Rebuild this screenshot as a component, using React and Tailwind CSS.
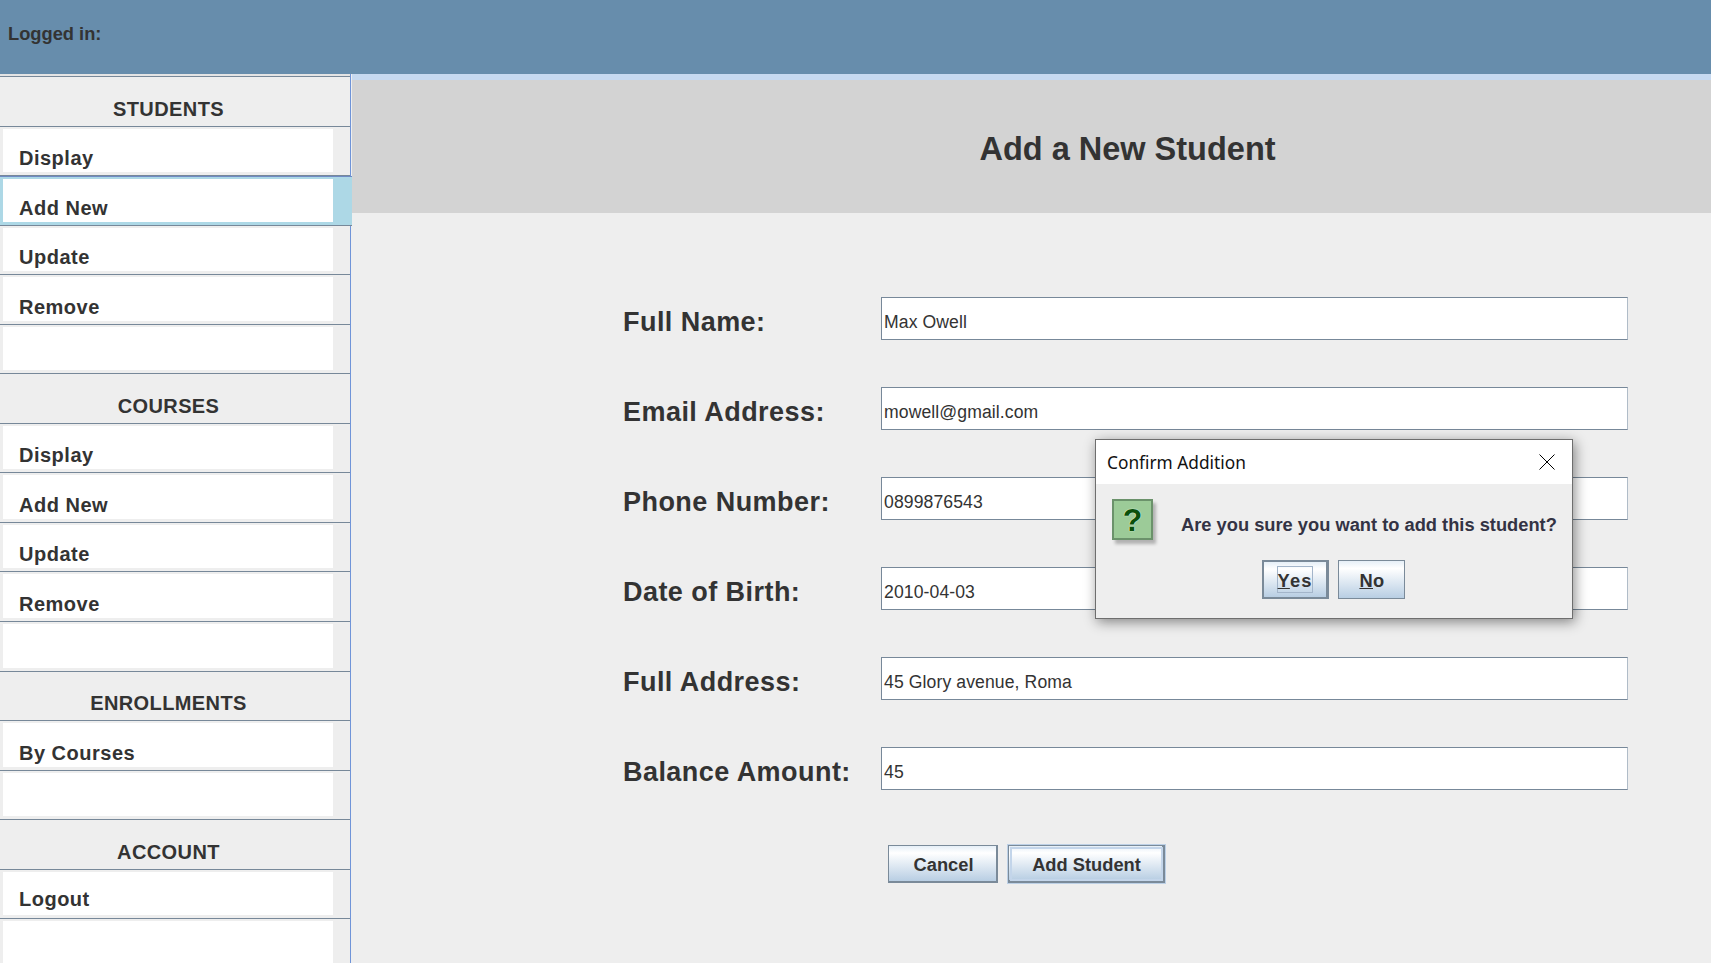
const sections = [
  { title: 'STUDENTS', items: ['Display', 'Add New', 'Update', 'Remove', ''] },
  { title: 'COURSES', items: ['Display', 'Add New', 'Update', 'Remove', ''] },
  { title: 'ENROLLMENTS', items: ['By Courses', ''] },
  { title: 'ACCOUNT', items: ['Logout', ''] },
];

const fields = [
  { label: 'Full Name:', value: 'Max Owell' },
  { label: 'Email Address:', value: 'mowell@gmail.com' },
  { label: 'Phone Number:', value: '0899876543' },
  { label: 'Date of Birth:', value: '2010-04-03' },
  { label: 'Full Address:', value: '45 Glory avenue, Roma' },
  { label: 'Balance Amount:', value: '45' },
];

const SectionHeader = ({ title }) => (
  <div className="h-[49.55px] w-[350px] shrink-0 flex items-end justify-center pb-[5px] bg-[#eeeeee] border-b border-[#778899] text-[20px] leading-[24px] font-bold tracking-[0.4px] text-[#333333]">
    <span className="pr-[13px]">{title}</span>
  </div>
);

const NavItem = ({ label, active }) => (
  <div className={`h-[49.55px] shrink-0 flex flex-col border-b pt-[2px] pb-[3px] pl-[3px] ${active ? 'w-[352px] bg-[#add8e6] border-[#778899] border-t border-t-[#6f8bc4]' : 'w-[350px] bg-[#eeeeee] border-[#778899]'}`}>
    <div className={`w-[330px] flex-1 bg-white flex items-end pl-[16px] text-[20px] leading-[24px] font-bold tracking-[0.5px] text-[#333333] ${label === 'Logout' ? 'pb-[4px]' : 'pb-[2px]'}`}>
      {label}
    </div>
  </div>
);

const Sidebar = () => (
  <div className="w-[352px] shrink-0 h-full overflow-hidden relative z-10">
    <div className="w-[351px] h-full border-r border-[#6f94d8] pt-[2px] bg-[#e4e4e4]">
      <div className="h-px w-[350px] bg-[#778899]" />
      {sections.map((section) => (
        <div key={section.title}>
          <SectionHeader title={section.title} />
          {section.items.map((item, index) => (
            <NavItem key={index} label={item} active={section.title === 'STUDENTS' && item === 'Add New'} />
          ))}
        </div>
      ))}
    </div>
  </div>
);

const FormRow = ({ label, value }) => (
  <div className="flex h-[43px] items-center">
    <div className="w-[258px] shrink-0 text-[27px] leading-[34px] font-bold tracking-[0.45px] text-[#333333] pt-[6px]">{label}</div>
    <div className="flex-1 h-full bg-white border border-[#778899] border-r-[#b0bcc8] pl-[2px] pt-[7px] flex items-center text-[17.6px] tracking-[0.1px] text-[#333333]">
      {value}
    </div>
  </div>
);

const OceanButton = ({ children, className }) => (
  <button className={`flex items-center justify-center bg-gradient-to-b from-[#e6eff7] via-white via-[20%] to-[#b8cee3] font-bold text-[#333333] ${className}`}>
    {children}
  </button>
);

const ConfirmDialog = () => (
  <div className="absolute left-[1095px] top-[439px] w-[478px] h-[180px] bg-[#eeeeee] border border-[#6e6e6e] shadow-[2px_3px_12px_rgba(0,0,0,0.45)] flex flex-col">
    <div className="h-[44px] bg-white flex items-center justify-between pl-[11px] pr-[17px] font-['Noto_Sans'] text-[17.3px] text-[#111111]">
      <span className="pt-[1px]">Confirm Addition</span>
      <svg width="16" height="16" viewBox="0 0 16 16" fill="none" stroke="black" strokeWidth="1">
        <path d="M0.5 0.5 L15.5 15.5 M15.5 0.5 L0.5 15.5" />
      </svg>
    </div>
    <div className="flex pl-[16px] pt-[15px]">
      <div className="w-[41px] h-[41px] shrink-0 bg-[#9ccb98] border-[2px] border-[#6b926b] shadow-[3px_4px_3px_rgba(0,0,0,0.25)] flex items-center justify-center text-[32px] leading-none font-bold text-[#0a500a] [text-shadow:0_0_1px_#e8ffe8,0_0_1px_#e8ffe8]">
        ?
      </div>
      <div className="ml-[28px] mt-[14px] text-[18.3px] leading-[24px] font-bold text-[#333344] whitespace-nowrap">
        Are you sure you want to add this student?
      </div>
    </div>
    <div className="flex gap-[9px] pl-[166px] mt-[20px] text-[18.3px]">
      <OceanButton className="w-[67px] h-[39px] border-[2px] border-[#7a8a99] border-r-[3px] tracking-[1.1px]">
        <span className="w-[36px] h-[27px] flex items-center justify-center pt-[2px] border border-[#a3b5ca]"><span><u>Y</u>es</span></span>
      </OceanButton>
      <OceanButton className="w-[67px] h-[39px] pt-[3px] pl-[1px] border border-[#7a8a99] tracking-[0.4px]">
        <span><u>N</u>o</span>
      </OceanButton>
    </div>
  </div>
);

const App = () => (
  <div className="relative w-[1711px] h-[963px] overflow-hidden bg-[#eeeeee] font-['Liberation_Sans',Arial,sans-serif]">
    <div className="h-[74px] bg-[#678dac] pl-[8px] pt-[23px] text-[18.3px] leading-[22px] font-bold text-[#333333]">
      Logged in:
    </div>
    <div className="flex h-[889px]">
      <Sidebar />
      <div className="flex-1 flex flex-col">
        <div className="h-[6px] bg-[#c6d9f0]" />
        <div className="h-[133px] bg-[#d3d3d3] flex items-center justify-center pl-[192px] pt-[6px] text-[32.5px] font-bold text-[#333333]">
          Add a New Student
        </div>
        <div className="pl-[271px] pr-[83px] pt-[84px]">
          <div className="flex flex-col gap-[47px]">
            {fields.map((field) => (
              <FormRow key={field.label} label={field.label} value={field.value} />
            ))}
          </div>
          <div className="flex gap-[10px] pl-[265px] mt-[55px] text-[18.3px]">
            <OceanButton className="w-[110px] h-[38px] pt-[3px] pl-[2px] border border-[#7a8a99] border-r-[2px] border-b-[2px]">Cancel</OceanButton>
            <OceanButton className="w-[157px] h-[38px] pt-[3px] pl-[2px] border border-[#7a8a99] border-r-[3px] border-b-[3px] outline-[2px] outline-[#c3d5ea] -outline-offset-[4px] shadow-[0_0_0_1px_#bcd0e6]">Add Student</OceanButton>
          </div>
        </div>
      </div>
    </div>
    <ConfirmDialog />
  </div>
);

export default App;
